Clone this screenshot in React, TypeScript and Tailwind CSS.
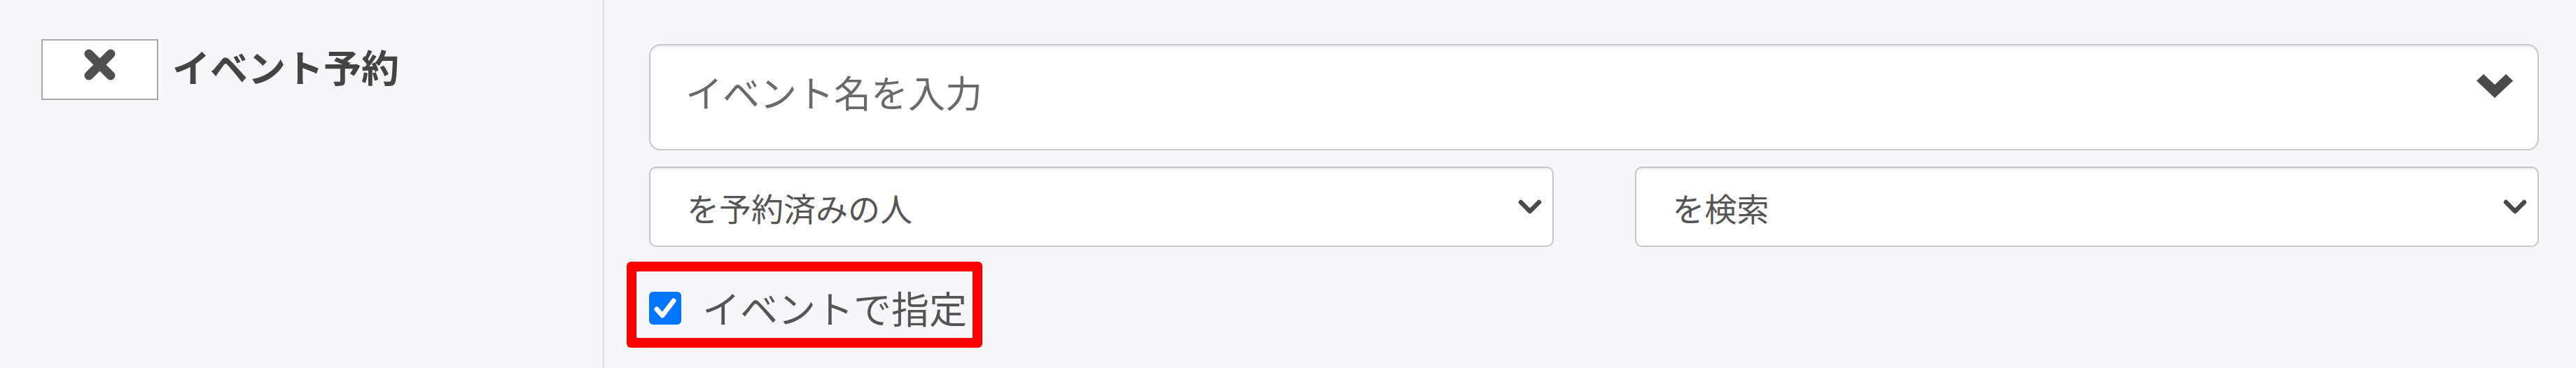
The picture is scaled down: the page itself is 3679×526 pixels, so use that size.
const font = "font-['Meiryo','Noto_Sans_CJK_JP','Noto_Sans',sans-serif]";

function ChevronBold() {
  return (
    <svg width="52" height="34" viewBox="0 0 52 36" preserveAspectRatio="none" className="shrink-0">
      <polygon points="0,10 10,0 26,16 42,0 52,10 26,36" fill="#4a4a4a" />
    </svg>
  );
}

function SelectArrow() {
  return (
    <svg width="34" height="21" viewBox="0 0 34 21" className="shrink-0">
      <polyline
        points="4,4 17,17 30,4"
        fill="none"
        stroke="#4a4a4a"
        strokeWidth={6.5}
        strokeLinecap="round"
        strokeLinejoin="round"
      />
    </svg>
  );
}

function FakeSelect({ label }: { label: string }) {
  return (
    <div className="flex h-[115px] items-center justify-between rounded-[10px] border-2 border-[#c8c8c8] bg-white pl-[52px] pr-[15px] shadow-[inset_0_2px_2px_rgba(0,0,0,0.08)]">
      <span className="text-[46px] leading-none text-[#555]">{label}</span>
      <SelectArrow />
    </div>
  );
}

export default function App() {
  return (
    <div className={`flex h-[526px] w-full bg-[#f7f7f9] ${font}`}>
      {/* label column */}
      <div className="flex w-[863px] shrink-0 items-start border-r-2 border-[#dedede] pl-[59px] pt-[56px]">
        <div className="flex h-[87px] w-[167px] justify-center border-2 border-[#a8a8a8] bg-white pt-[12px]">
          <svg width="47" height="45" viewBox="0 0 47 45">
            <path d="M8 7 L39 38 M39 7 L8 38" stroke="#505050" strokeWidth={13} strokeLinecap="round" />
          </svg>
        </div>
        <div className="ml-[20px] mt-[12px] text-[54px] font-bold leading-none text-[#444]">イベント予約</div>
      </div>

      {/* form column */}
      <div className="min-w-0 flex-1 pl-[64px] pr-[53px] pt-[63px]">
        <div className="flex h-[152px] items-start justify-between rounded-[16px] border-2 border-[#c8c8c8] bg-white pl-[50px] pr-[35px] pt-[40px] shadow-[inset_0_2px_2px_rgba(0,0,0,0.08)]">
          <span className="text-[53px] leading-none text-[#6a6a6a]">イベント名を入力</span>
          <div className="mt-[1px]">
            <ChevronBold />
          </div>
        </div>

        <div className="mt-[23px] grid grid-cols-2 gap-x-[116px]">
          <FakeSelect label="を予約済みの人" />
          <FakeSelect label="を検索" />
        </div>

        <div className="relative mt-[57px] flex h-[60px] items-center">
          <span className="flex h-[47px] w-[46px] shrink-0 items-center justify-center rounded-[6px] bg-[#0075ff]">
            <svg width="46" height="47" viewBox="0 0 46 47">
              <polyline
                points="11,25 19,34 35,13"
                fill="none"
                stroke="#fff"
                strokeWidth={7}
                strokeLinecap="round"
                strokeLinejoin="round"
              />
            </svg>
          </span>
          <span className="ml-[30px] text-[54px] leading-none text-[#555]">イベントで指定</span>
          <div className="pointer-events-none absolute left-[-32px] top-[-36px] h-[123px] w-[508px] rounded-[6px] border-[14px] border-[#ff0000]" />
        </div>
      </div>
    </div>
  );
}
